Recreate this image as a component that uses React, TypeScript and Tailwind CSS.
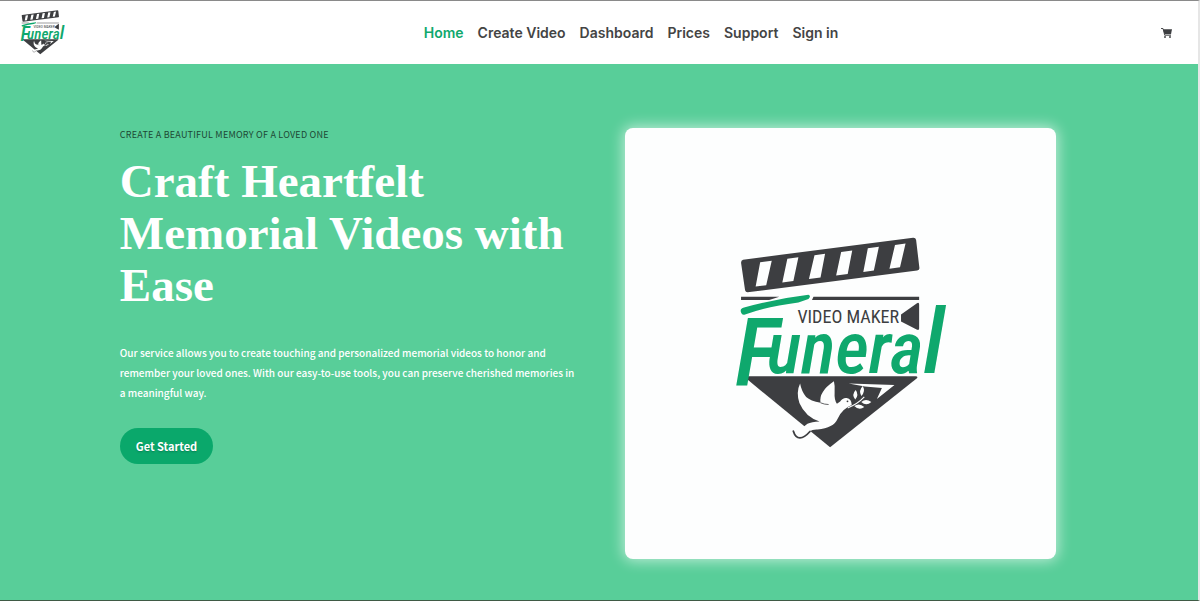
import React from "react";

const navItems = ["Home", "Create Video", "Dashboard", "Prices", "Support", "Sign in"];

function Logo({ className }: { className: string }) {
  return (
    <svg viewBox="734 238 214 212" className={className} role="img" aria-label="Video Maker Funeral">
      {/* clapper board */}
      <path
        fill="#3d3e41"
        d="M744 260.500 L913 238.700 Q915.500 238.500 916 241 L919.300 269 Q919.300 271 917 271.200 L748.500 293 Q746.500 293 746 291 L742 263.500 Q742 261 744 260.500Z"
      />
      <path
        fill="#fdfefe"
        d="M761 263l11.500-1.500-5.500 24.500-10.500 1.300zM788 259.700l11-1.500-5 23.500-11 1.500zM815 256.200l10.500-1.500-4.500 23.500-11.500 1.500zM841.500 252.800l11-1.500-4.500 23.500-11.500 1.500zM868 249.300l11-1.500-5 23.500-10.500 1.500zM895 246l10.500-1.500-5.500 23.500-10.500 1.500z"
      />
      {/* divider and camera lens */}
      <path fill="#3d3e41" d="M742 297.500h38l-10 3h-28zM814 297.500h105v3H812.500zM901 315l15.500-11q2.500-1.500 2.500 1v24q0 2-2.500 1l-15.500-8z" />
      <text x="798" y="323" fontSize="18" fontWeight="400" fill="#3d3e41" className="font-['Roboto_Condensed','Roboto',sans-serif]">
        VIDEO MAKER
      </text>
      {/* triangle */}
      <path fill="#3d3e41" d="M748.500 376.500h167q3 0 1 2.200L830.500 447 747.500 379q-1.500-2.500 1-2.500z" />
      {/* dove */}
      <path
        fill="#fdfefe"
        stroke="none"
        d="M800.700 383.500Q796.500 392 800 403 806 417 820 421.300 812 421.500 808 423.700L801.700 428.700Q798 432 794 431 795 436 800 437.700 805 437 810 431.300 813 429 818 429.300 834 428 838 418.700 842 409 852 405 852 399 847 398 843 397.500 840.500 401.500L837.300 403.700Q834.500 400 835 392 835.500 386 834.300 381.300 826 387 823.300 392 820 397 821 402.700 811 401 806.700 397 802 391 800.700 383.500Z"
      />
      <path d="M821 402.800Q825 404.500 829 404.500" stroke="#3d3e41" strokeWidth="0.800" fill="none" />
      <path d="M794 431Q796 437.500 800.500 437.700 805 437.500 810.500 431.300" stroke="#3d3e41" strokeWidth="1.800" fill="none" strokeLinecap="round" />
      <circle cx="847.800" cy="401.300" r="0.900" fill="#3d3e41" />
      {/* olive branch */}
      <path d="M848 408Q858 404 864.500 397" stroke="#fdfefe" strokeWidth="1.100" fill="none" />
      <path
        fill="#fdfefe"
        d="M855.500 399.500q-4-5 .500-9.500 3.500 5-.500 9.500zM861.500 396q-3-5.500 1.500-10 3 5.500-1.500 10zM861.500 402q4.500-4 10 0-5 4.500-10 0zM854.500 406q5-3.500 10 1-5 4-10-1z"
      />
      <path fill="#fdfefe" d="M849 383.500l45.500 1.500-17.500 14 5-11-17-1.500z" />
      {/* brush flourish and name */}
      <path fill="#0fa86d" d="M742 313q-1.500-4 3-5 31-8.500 64-12.500 3 1 0 4l-10 3.500q-31 4-53 12-3 1-4-2z" />
      <text x="736" y="385" fontWeight="500" fontStyle="italic" fill="#0fa86d" className="font-['Roboto_Condensed','Roboto',sans-serif]">
        <tspan fontSize="94">F</tspan>
        <tspan fontSize="72" dx="-12" dy="-12">unera</tspan>
        <tspan fontSize="90">l</tspan>
      </text>
    </svg>
  );
}

function CartIcon() {
  return (
    <svg viewBox="0 0 22 20" className="h-[10px] w-[11px]" aria-hidden="true">
      <path d="M0 1h4l3.500 13.500H20" fill="none" stroke="currentColor" strokeWidth="1.800" />
      <path d="M4 2.500H22L20 12.500H7z" fill="currentColor" />
      <circle cx="8" cy="18" r="1.900" fill="currentColor" />
      <circle cx="18" cy="18" r="1.900" fill="currentColor" />
    </svg>
  );
}

export default function App() {
  return (
    <div className="flex min-h-screen flex-col border-r-2 border-t border-b border-t-[#8a8a8a] border-r-[#e6e6e6] border-b-[#3f5a45] bg-white font-['Noto_Sans_CJK_JP',sans-serif]">
      <header className="flex items-center justify-between bg-white pt-2 pr-6 pb-2 pl-5">
        <a href="#home" className="flex w-29 py-px">
          <Logo className="h-[45px] w-[45px]" />
        </a>
        <nav className="flex gap-[14px] font-['Inter',sans-serif] text-sm font-semibold">
          {navItems.map((item, i) => (
            <a key={item} href="#" className={i === 0 ? "text-[#0fa86d]" : "text-[#444]"}>
              {item}
            </a>
          ))}
        </nav>
        <a href="#cart" aria-label="Cart" className="flex w-12 justify-end pr-0.5 text-[#3d3e41]">
          <CartIcon />
        </a>
      </header>
      <main className="flex flex-1 items-start gap-12 bg-[#58ce99] pt-16 pr-[142px] pb-10 pl-[10%]">
        <section className="flex-1">
          <p className="text-[9px] leading-[14px] tracking-wide text-[#1d4734] uppercase">
            Create a beautiful memory of a loved one
          </p>
          <h1 className="mt-[13px] font-['Liberation_Serif',serif] text-[47px] leading-[52px] font-bold text-white">
            Craft Heartfelt Memorial Videos with Ease
          </h1>
          <p className="mt-8 text-[10px] leading-5 font-medium text-white">
            Our service allows you to create touching and personalized memorial videos to honor and remember your loved
            ones. With our easy-to-use tools, you can preserve cherished memories in a meaningful way.
          </p>
          <button
            type="button"
            className="mt-[25px] rounded-full bg-[#0aa86b] px-4 py-2 text-[11px] leading-5 font-bold text-white text-shadow-sm"
          >
            Get Started
          </button>
        </section>
        <div className="flex aspect-square w-[46%] items-center justify-center rounded-lg bg-[#fdfefe] shadow-[0_0_14px_2px_rgba(255,255,255,0.6)]">
          <Logo className="w-1/2" />
        </div>
      </main>
    </div>
  );
}
